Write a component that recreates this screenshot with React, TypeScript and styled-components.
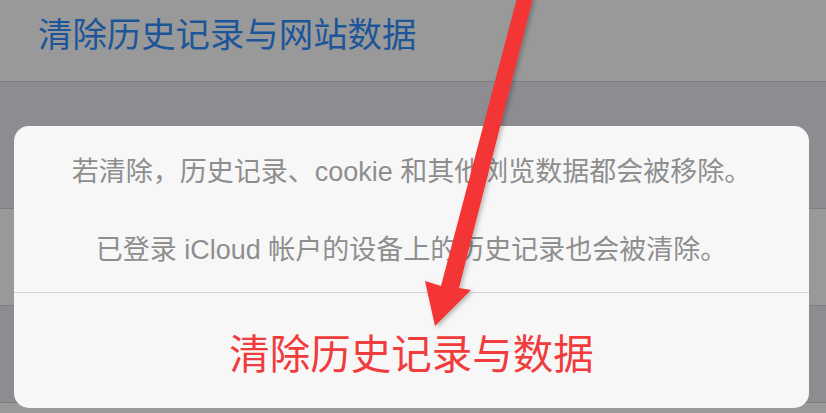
import React from "react";
import styled, { createGlobalStyle } from "styled-components";

const Global = createGlobalStyle`
  html, body {
    margin: 0;
    padding: 0;
    width: 826px;
    height: 413px;
    overflow: hidden;
    background: #8e8e93;
  }
  * {
    box-sizing: border-box;
  }
`;

const FONT = `"Liberation Sans", "Noto Sans CJK SC", sans-serif`;

const Screen = styled.div`
  position: relative;
  width: 826px;
  height: 413px;
  overflow: hidden;
  font-family: ${FONT};
`;

const List = styled.div`
  display: flex;
  flex-direction: column;
`;

const Band = styled.div<{ $h: number; $light?: boolean }>`
  height: ${(p) => p.$h}px;
  flex: none;
  background: ${(p) => (p.$light ? "#999999" : "#8d8d91")};
  border-bottom: 1px solid #7d7d80;
  display: flex;
  align-items: center;
  padding-left: 38px;
`;

const CellLabel = styled.span`
  font-size: 34.4px;
  color: #1c5699;
  margin-top: -17px;
`;

const Sheet = styled.div`
  position: absolute;
  left: 14px;
  top: 126px;
  width: 795px;
  height: 282px;
  border-radius: 15px;
  background: #f7f7f8;
  display: flex;
  flex-direction: column;
  overflow: hidden;
`;

const Message = styled.div`
  height: 167px;
  flex: none;
  display: flex;
  flex-direction: column;
  align-items: center;
  padding-top: 28px;
  gap: 42px;
  border-bottom: 1px solid #d3d3d6;
`;

const MessageLine = styled.p`
  margin: 0;
  font-size: 27px;
  line-height: 36px;
  color: #8e8e8e;
  white-space: nowrap;
`;

const Action = styled.div`
  flex: 1;
  display: flex;
  align-items: center;
  justify-content: center;
  font-size: 40.5px;
  color: #f03c3c;
  padding-top: 2px;
`;

const Overlay = styled.svg`
  position: absolute;
  left: 0;
  top: 0;
  width: 826px;
  height: 413px;
  pointer-events: none;
`;

const Arrow = () => (
  <Overlay viewBox="0 0 826 413">
    <defs>
      <filter id="sh" x="-20%" y="-20%" width="140%" height="140%">
        <feDropShadow dx="2" dy="2" stdDeviation="2" floodColor="#000" floodOpacity="0.25" />
      </filter>
    </defs>
    <polygon
      filter="url(#sh)"
      fill="#f43434"
      points="517,-2 533,-2 459,288 471,290 435,326 425,281 441,286"
    />
  </Overlay>
);

export default function App() {
  return (
    <>
      <Global />
      <Screen>
        <List>
          <Band $h={82} $light>
            <CellLabel>清除历史记录与网站数据</CellLabel>
          </Band>
          <Band $h={127} />
          <Band $h={97} $light />
          <Band $h={97} />
          <Band $h={20} $light />
        </List>
        <Sheet>
          <Message>
            <MessageLine>若清除，历史记录、cookie 和其他浏览数据都会被移除。</MessageLine>
            <MessageLine>已登录 iCloud 帐户的设备上的历史记录也会被清除。</MessageLine>
          </Message>
          <Action>清除历史记录与数据</Action>
        </Sheet>
        <Arrow />
      </Screen>
    </>
  );
}
